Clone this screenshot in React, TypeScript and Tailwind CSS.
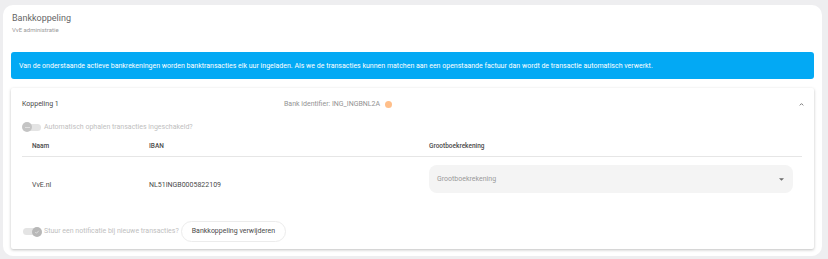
import React from 'react';

function Toggle({ checked }: { checked?: boolean }) {
  return (
    <div className="relative w-[20px] h-[10px] flex items-center shrink-0">
      <div className="w-[18px] h-[7px] rounded-full bg-[#e4e4e4] ml-[1px]" />
      <div
        className={
          checked
            ? 'absolute right-0 top-0 w-[10px] h-[10px] rounded-full bg-[#b8b8b8] flex items-center justify-center'
            : 'absolute left-0 top-0 w-[10px] h-[10px] rounded-full bg-[#c4c4c4] flex items-center justify-center'
        }
      >
        {checked ? (
          <svg width="6" height="6" viewBox="0 0 24 24" fill="none" stroke="#e8e8e8" strokeWidth="3">
            <path d="M5 12l5 5 9-10" />
          </svg>
        ) : (
          <div className="w-[5px] h-[1px] bg-[#e0e0e0]" />
        )}
      </div>
    </div>
  );
}

export default function App() {
  return (
    <div
      className="min-h-screen bg-[#eeeef0] pt-[5px] pl-[3px] pr-[6px] pb-[3px]"
      style={{ fontFamily: 'Roboto, "Liberation Sans", sans-serif' }}
    >
      <div className="bg-white rounded-[10px] px-[8px] pt-[7px] h-[251px]">
        {/* Header */}
        <div className="pl-[1px]">
          <h1 className="text-[9px] leading-[12px] text-[#666]">Bankkoppeling</h1>
          <p className="text-[6px] leading-[8px] text-[#9a9a9a] mt-[2px]">VvE administratie</p>
        </div>

        {/* Info */}
        <div className="mt-[18px] bg-[#03a9f4] rounded-[3px] h-[27px] flex items-center px-[8px]">
          <p className="text-[7px] text-white pt-[1px]">
            Van de onderstaande actieve bankrekeningen worden banktransacties elk uur ingeladen. Als we de
            transacties kunnen matchen aan een openstaande factuur dan wordt de transactie automatisch verwerkt.
          </p>
        </div>

        {/* Accordion */}
        <div className="mt-[9px] bg-white rounded-[2px] shadow-[0_1px_3px_rgba(0,0,0,0.25)] px-[11px]">
          <div className="h-[32px] flex items-center">
            <span className="text-[7px] text-[#4a4a4a] w-[262px]">Koppeling 1</span>
            <span className="text-[7px] text-[#939393]">Bank identifier: ING_INGBNL2A</span>
            <span className="ml-[5px] w-[7px] h-[7px] rounded-full bg-[#ffbf8a]" />
            <div className="flex-1" />
            <svg width="7" height="7" viewBox="0 0 24 24" fill="none" stroke="#666" strokeWidth="3" className="mr-[-2px]">
              <path d="M6 15l6-6 6 6" />
            </svg>
          </div>

          <div className="h-[14px] flex items-center gap-[1px]">
            <Toggle />
            <span className="text-[7px] text-[#c0c0c0] ml-[1px]">Automatisch ophalen transacties ingeschakeld?</span>
          </div>

          {/* Table */}
          <div className="mt-[3px] mr-[1px]">
            <div className="h-[20px] grid grid-cols-[127px_280px_364px] items-center border-b border-[#e6e6e6] pt-[1px] text-[6.5px] font-medium text-[#4a4a4a]">
              <span className="pl-[10px]">Naam</span>
              <span>IBAN</span>
              <span>Grootboekrekening</span>
            </div>
            <div className="h-[57px] grid grid-cols-[127px_280px_364px] items-start">
              <span className="pl-[10px] pt-[23px] text-[7px] leading-[10px] text-[#4a4a4a]">VvE.nl</span>
              <span className="pt-[23px] text-[7px] leading-[10px] text-[#4a4a4a]">NL51INGB0005822109</span>
              <div className="mt-[8px] h-[28px] bg-[#f4f4f4] rounded-[8px] flex items-center px-[8px]">
                <span className="text-[7px] text-[#9a9a9a] flex-1">Grootboekrekening</span>
                <svg width="5" height="3" viewBox="0 0 10 5" className="mr-[1px]">
                  <path d="M0 0h10L5 5z" fill="#6b6b6b" />
                </svg>
              </div>
            </div>
          </div>

          <div className="h-[35px] flex items-center">
            <Toggle checked />
            <span className="text-[7px] text-[#c0c0c0] ml-[2px]">Stuur een notificatie bij nieuwe transacties?</span>
            <button className="ml-[2px] h-[21px] px-[10px] rounded-full border border-[#ececec] text-[7px] text-[#4a4a4a] bg-white">
              Bankkoppeling verwijderen
            </button>
          </div>
        </div>
      </div>
    </div>
  );
}
